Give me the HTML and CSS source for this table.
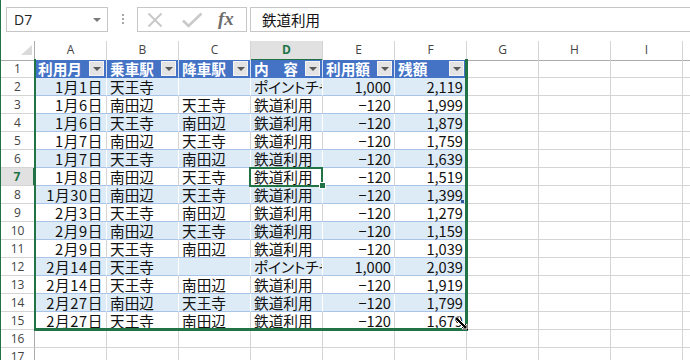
FILE: index.html
```html
<!DOCTYPE html>
<html lang="ja">
<head>
<meta charset="utf-8">
<title>Sheet</title>
<link rel="stylesheet" href="styles.css">
</head>
<body>
<div class="app">
  <div class="fbar">
    <div class="namebox"><span>D7</span><span class="caret"></span></div>
    <div class="vdots"><i></i><i></i><i></i></div>
    <div class="fbtns">
      <svg class="ico" width="110" height="23" viewBox="0 0 110 23">
        <path d="M10.5 5.5 L23.5 18.5 M23.5 5.5 L10.5 18.5" stroke="#C9C9C9" stroke-width="2" fill="none"/>
        <path d="M45 12.5 L50.5 18 L63.5 5.5" stroke="#C9C9C9" stroke-width="2.6" fill="none"/>
      </svg>
      <span class="fx">fx</span>
    </div>
    <div class="finput">鉄道利用</div>
  </div>

  <div class="row colhead">
    <div class="corner"><svg width="33" height="18" viewBox="0 0 33 18"><path d="M31 4 L31 14 L20 14 Z" fill="#DADADA"/></svg></div>
    <div class="ch">A</div><div class="ch">B</div><div class="ch">C</div><div class="ch sel">D</div><div class="ch">E</div><div class="ch">F</div><div class="ch">G</div><div class="ch">H</div><div class="ch">I</div><div class="ch">J</div>
  </div>

  <div class="row">
    <div class="rh">1</div>
    <div class="th">利用月<span class="fb"></span></div>
    <div class="th">乗車駅<span class="fb"></span></div>
    <div class="th">降車駅<span class="fb"></span></div>
    <div class="th">内　容<span class="fb"></span></div>
    <div class="th">利用額<span class="fb"></span></div>
    <div class="th">残額<span class="fb"></span></div>
    <div class="c"></div><div class="c"></div><div class="c"></div><div class="c"></div>
  </div>

  <div class="row band">
    <div class="rh">2</div>
    <div class="td r dt">1月1日</div><div class="td">天王寺</div><div class="td"></div><div class="td clip">ポイントチャージ</div><div class="td r">1,000</div><div class="td r">2,119</div>
    <div class="c"></div><div class="c"></div><div class="c"></div><div class="c"></div>
  </div>
  <div class="row">
    <div class="rh">3</div>
    <div class="td r dt">1月6日</div><div class="td">南田辺</div><div class="td">天王寺</div><div class="td">鉄道利用</div><div class="td r">−120</div><div class="td r">1,999</div>
    <div class="c"></div><div class="c"></div><div class="c"></div><div class="c"></div>
  </div>
  <div class="row band">
    <div class="rh">4</div>
    <div class="td r dt">1月6日</div><div class="td">天王寺</div><div class="td">南田辺</div><div class="td">鉄道利用</div><div class="td r">−120</div><div class="td r">1,879</div>
    <div class="c"></div><div class="c"></div><div class="c"></div><div class="c"></div>
  </div>
  <div class="row">
    <div class="rh">5</div>
    <div class="td r dt">1月7日</div><div class="td">南田辺</div><div class="td">天王寺</div><div class="td">鉄道利用</div><div class="td r">−120</div><div class="td r">1,759</div>
    <div class="c"></div><div class="c"></div><div class="c"></div><div class="c"></div>
  </div>
  <div class="row band">
    <div class="rh">6</div>
    <div class="td r dt">1月7日</div><div class="td">天王寺</div><div class="td">南田辺</div><div class="td">鉄道利用</div><div class="td r">−120</div><div class="td r">1,639</div>
    <div class="c"></div><div class="c"></div><div class="c"></div><div class="c"></div>
  </div>
  <div class="row">
    <div class="rh sel">7</div>
    <div class="td r dt">1月8日</div><div class="td">南田辺</div><div class="td">天王寺</div><div class="td">鉄道利用</div><div class="td r">−120</div><div class="td r">1,519</div>
    <div class="c"></div><div class="c"></div><div class="c"></div><div class="c"></div>
  </div>
  <div class="row band">
    <div class="rh">8</div>
    <div class="td r dt">1月30日</div><div class="td">南田辺</div><div class="td">天王寺</div><div class="td">鉄道利用</div><div class="td r">−120</div><div class="td r">1,399</div>
    <div class="c"></div><div class="c"></div><div class="c"></div><div class="c"></div>
  </div>
  <div class="row">
    <div class="rh">9</div>
    <div class="td r dt">2月3日</div><div class="td">天王寺</div><div class="td">南田辺</div><div class="td">鉄道利用</div><div class="td r">−120</div><div class="td r">1,279</div>
    <div class="c"></div><div class="c"></div><div class="c"></div><div class="c"></div>
  </div>
  <div class="row band">
    <div class="rh">10</div>
    <div class="td r dt">2月9日</div><div class="td">南田辺</div><div class="td">天王寺</div><div class="td">鉄道利用</div><div class="td r">−120</div><div class="td r">1,159</div>
    <div class="c"></div><div class="c"></div><div class="c"></div><div class="c"></div>
  </div>
  <div class="row">
    <div class="rh">11</div>
    <div class="td r dt">2月9日</div><div class="td">天王寺</div><div class="td">南田辺</div><div class="td">鉄道利用</div><div class="td r">−120</div><div class="td r">1,039</div>
    <div class="c"></div><div class="c"></div><div class="c"></div><div class="c"></div>
  </div>
  <div class="row band">
    <div class="rh">12</div>
    <div class="td r dt">2月14日</div><div class="td">天王寺</div><div class="td"></div><div class="td clip">ポイントチャージ</div><div class="td r">1,000</div><div class="td r">2,039</div>
    <div class="c"></div><div class="c"></div><div class="c"></div><div class="c"></div>
  </div>
  <div class="row">
    <div class="rh">13</div>
    <div class="td r dt">2月14日</div><div class="td">天王寺</div><div class="td">南田辺</div><div class="td">鉄道利用</div><div class="td r">−120</div><div class="td r">1,919</div>
    <div class="c"></div><div class="c"></div><div class="c"></div><div class="c"></div>
  </div>
  <div class="row band">
    <div class="rh">14</div>
    <div class="td r dt">2月27日</div><div class="td">南田辺</div><div class="td">天王寺</div><div class="td">鉄道利用</div><div class="td r">−120</div><div class="td r">1,799</div>
    <div class="c"></div><div class="c"></div><div class="c"></div><div class="c"></div>
  </div>
  <div class="row">
    <div class="rh">15</div>
    <div class="td r dt">2月27日</div><div class="td">天王寺</div><div class="td">南田辺</div><div class="td">鉄道利用</div><div class="td r">−120</div><div class="td r">1,679</div>
    <div class="c"></div><div class="c"></div><div class="c"></div><div class="c"></div>
  </div>
  <div class="row">
    <div class="rh">16</div>
    <div class="c"></div><div class="c"></div><div class="c"></div><div class="c"></div><div class="c"></div><div class="c"></div><div class="c"></div><div class="c"></div><div class="c"></div><div class="c"></div>
  </div>
  <div class="row">
    <div class="rh">17</div>
    <div class="c"></div><div class="c"></div><div class="c"></div><div class="c"></div><div class="c"></div><div class="c"></div><div class="c"></div><div class="c"></div><div class="c"></div><div class="c"></div>
  </div>

  <div class="tablesel"></div>
  <div class="active"></div>
  <div class="handle"></div>
  <div class="mark"></div>
  <svg class="cursor" width="16" height="16" viewBox="0 0 16 16">
    <rect x="8" y="8" width="6" height="6" fill="#000"/>
    <path d="M1 1 L6 1 L4.5 2.5 L11.5 9.5 L13 8 L13 13 L8 13 L9.5 11.5 L2.5 4.5 L1 6 Z" fill="#000" stroke="#fff" stroke-width="1"/>
  </svg>
</div>
</body>
</html>
```

FILE: styles.css
```css
* { box-sizing: border-box; }
html, body { margin: 0; padding: 0; }
body {
  width: 690px;
  height: 360px;
  overflow: hidden;
  background: #fff;
  font-family: "Noto Sans CJK JP", sans-serif;
}
.app {
  position: relative;
  width: 690px;
  height: 360px;
  border-left: 1px solid #217346;
  overflow: hidden;
}

/* formula bar */
.fbar {
  display: flex;
  align-items: flex-start;
  height: 41px;
  padding-top: 7px;
}
.namebox {
  margin-left: 5px;
  width: 102px;
  height: 25px;
  border: 1px solid #C6C6C6;
  display: flex;
  align-items: center;
  justify-content: space-between;
  padding: 0 6px 0 7px;
  font: 14px "Open Sans", sans-serif;
  color: #222;
}
.caret {
  width: 0; height: 0;
  border-left: 4px solid transparent;
  border-right: 4px solid transparent;
  border-top: 4px solid #7A7A7A;
}
.vdots {
  margin-left: 14px;
  margin-top: 7px;
  display: flex;
  flex-direction: column;
  gap: 2px;
}
.vdots i { display: block; width: 2px; height: 2px; background: #A6A6A6; }
.fbtns {
  position: relative;
  margin-left: 13px;
  width: 110px;
  height: 25px;
  border: 1px solid #C6C6C6;
}
.ico { position: absolute; left: 0; top: 0; }
.fx {
  position: absolute;
  left: 80px;
  top: 0;
  font: italic bold 19px "Liberation Serif", serif;
  line-height: 22px;
  color: #6E6E6E;
}
.finput {
  margin-left: 3px;
  margin-right: -20px;
  flex: 1;
  height: 25px;
  border: 1px solid #C6C6C6;
  padding-left: 11px;
  font-size: 14.5px;
  line-height: 23px;
  color: #111;
}

/* grid */
.row {
  display: grid;
  grid-template-columns: 34px repeat(10, 72px);
  height: 18px;
}
.colhead { height: 19px; }
.corner {
  border-right: 1px solid #ABABAB;
  border-bottom: 1px solid #ABABAB;
}
.corner svg { display: block; }
.ch {
  border-right: 1px solid #D4D4D4;
  border-bottom: 1px solid #ABABAB;
  text-align: center;
  font: 12px "Open Sans", sans-serif;
  line-height: 18px;
  color: #444;
}
.ch.sel {
  background: #E1E1E1;
  color: #217346;
  font-weight: bold;
  border-bottom: 2px solid #217346;
}
.rh {
  border-right: 1px solid #ABABAB;
  border-bottom: 1px solid #D4D4D4;
  text-align: center;
  font: 12px "Open Sans", sans-serif;
  line-height: 17px;
  color: #444;
}
.rh.sel {
  background: #E1E1E1;
  color: #217346;
  font-weight: bold;
  border-right: 2px solid #217346;
}
.c, .td, .th {
  border-right: 1px solid #D4D4D4;
  border-bottom: 1px solid #D4D4D4;
  padding: 0 3px;
  font-size: 14.67px;
  line-height: 17px;
  white-space: nowrap;
  color: #111;
}
.clip { overflow: hidden; font-feature-settings: "palt"; }
.r { text-align: right; }
.dt { letter-spacing: 0.6px; padding-right: 3px; }
.th {
  position: relative;
  background: #4472C4;
  color: #fff;
  font-weight: bold;
  border-right-color: #D9E1F2;
  border-bottom-color: #4472C4;
}
.fb {
  position: absolute;
  right: 2px;
  top: 1px;
  width: 15px;
  height: 15px;
  background: #E3E3E3;
  border: 1px solid #F4F4F4;
}
.fb::after {
  content: "";
  position: absolute;
  left: 3px;
  top: 5px;
  border-left: 4px solid transparent;
  border-right: 4px solid transparent;
  border-top: 4px solid #595959;
}
.td { border-bottom-color: #A9C4E8; }
.band .td {
  background: #DDEBF7;
  border-right-color: #FFFFFF;
}

/* overlays */
.tablesel {
  position: absolute;
  left: 33px;
  top: 59px;
  width: 434px;
  height: 272px;
  border-left: 2px solid #217346;
  border-right: 3px solid #217346;
  border-bottom: 3px solid #217346;
}
.active {
  position: absolute;
  left: 248px;
  top: 167px;
  width: 74px;
  height: 20px;
  border: 2px solid #217346;
}
.handle {
  position: absolute;
  left: 318px;
  top: 182px;
  width: 7px;
  height: 7px;
  background: #217346;
  border: 1px solid #fff;
}
.mark {
  position: absolute;
  left: 460px;
  top: 200px;
  width: 3px;
  height: 3px;
  background: #2F5597;
}
.cursor {
  position: absolute;
  left: 453px;
  top: 316px;
}
```
